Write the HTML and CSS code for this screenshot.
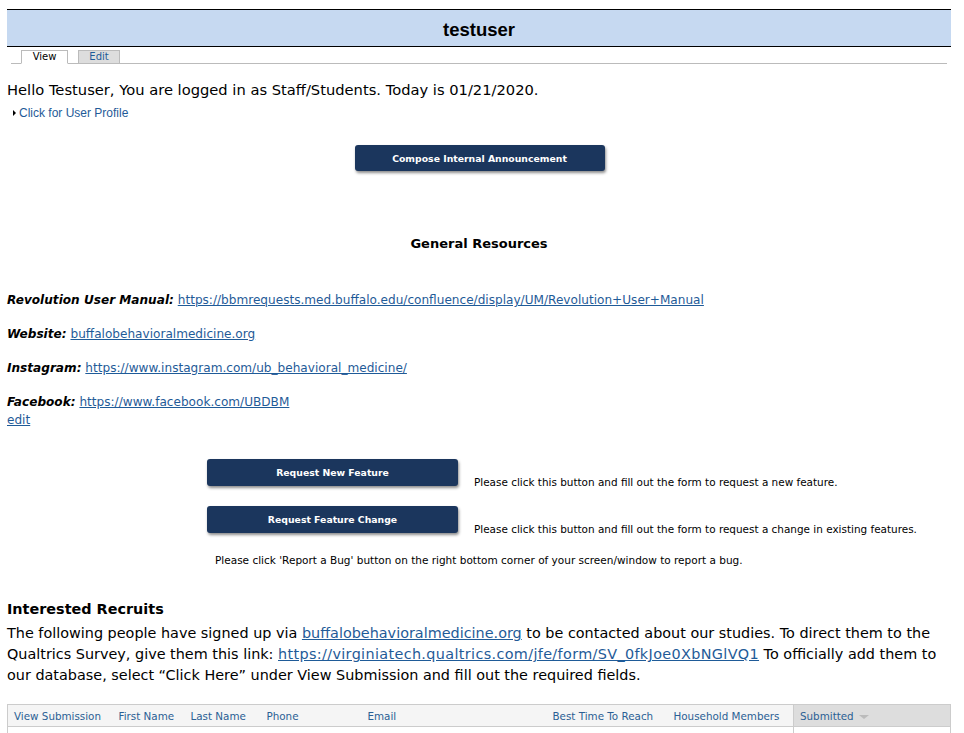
FILE: index.html
```html
<!DOCTYPE html>
<html>
<head>
<meta charset="utf-8">
<link rel="stylesheet" href="styles.css">
</head>
<body>
<div class="page">
  <div class="titlebar"><h1>testuser</h1></div>
  <div class="tabs">
    <span class="tab tab-active">View</span>
    <span class="tab tab-inactive">Edit</span>
  </div>
  <p class="hello">Hello Testuser, You are logged in as Staff/Students. Today is 01/21/2020.</p>
  <div class="profile"><span class="tri"></span><a href="#">Click for User Profile</a></div>
  <div class="center-row"><button class="btn btn-compose">Compose Internal Announcement</button></div>
  <h2 class="gr">General Resources</h2>
  <div class="resources">
    <p class="res"><b>Revolution User Manual:</b> <a href="#">https://bbmrequests.med.buffalo.edu/confluence/display/UM/Revolution+User+Manual</a></p>
    <p class="res"><b>Website:</b> <a href="#">buffalobehavioralmedicine.org</a></p>
    <p class="res"><b>Instagram:</b> <a href="#">https://www.instagram.com/ub_behavioral_medicine/</a></p>
    <p class="res res-last"><b>Facebook:</b> <a href="#">https://www.facebook.com/UBDBM</a></p>
    <a class="edit" href="#">edit</a>
  </div>
  <div class="requests">
    <div class="req-row">
      <button class="btn btn-req">Request New Feature</button>
      <span class="req-note">Please click this button and fill out the form to request a new feature.</span>
    </div>
    <div class="req-row">
      <button class="btn btn-req">Request Feature Change</button>
      <span class="req-note">Please click this button and fill out the form to request a change in existing features.</span>
    </div>
    <p class="bug">Please click 'Report a Bug' button on the right bottom corner of your screen/window to report a bug.</p>
  </div>
  <h3 class="ir">Interested Recruits</h3>
  <p class="intro">The following people have signed up via <a href="#">buffalobehavioralmedicine.org</a> to be contacted about our studies. To direct them to the Qualtrics Survey, give them this link: <a class="qlink" href="#">https://virginiatech.qualtrics.com/jfe/form/SV_0fkJoe0XbNGlVQ1</a> To officially add them to our database, select “Click Here” under View Submission and fill out the required fields.</p>
  <table class="grid">
    <thead>
      <tr>
        <th class="c1">View Submission</th>
        <th class="c2">First Name</th>
        <th class="c3">Last Name</th>
        <th class="c4">Phone</th>
        <th class="c5">Email</th>
        <th class="c6">Best Time To Reach</th>
        <th class="c7">Household Members</th>
        <th class="c8 sorted">Submitted <span class="sort"></span></th>
      </tr>
    </thead>
    <tbody>
      <tr><td></td><td></td><td></td><td></td><td></td><td></td><td></td><td class="sorted-cell"></td></tr>
    </tbody>
  </table>
</div>
</body>
</html>
```
FILE: styles.css
```css
* { box-sizing: border-box; }
html, body { margin: 0; padding: 0; background: #fff; }
body { font-family: "DejaVu Sans", Verdana, sans-serif; color: #000; }
.page { padding: 9px 13px 0 7px; }
a { color: #1f5b98; }

.titlebar {
  background: #c6d9f1;
  border-top: 1px solid #000;
  border-bottom: 1px solid #000;
  height: 38px;
  display: flex;
  align-items: center;
  justify-content: center;
}
.titlebar h1 {
  margin: 0;
  font-family: "Liberation Sans", Arial, sans-serif;
  font-size: 18.5px;
  font-weight: bold;
  padding-top: 4px;
}

.tabs {
  margin: 4px 4px 0 4px;
  border-bottom: 1px solid #bbb;
  height: 13px;
  display: flex;
  padding-left: 10px;
  gap: 10px;
  align-items: flex-end;
}
.tab {
  font-size: 10px;
  line-height: 11px;
  height: 14px;
  margin-bottom: -1px;
  border: 1px solid #bbb;
  text-align: center;
}
.tab-active { width: 47px; background: #fff; border-bottom-color: #fff; color: #000; }
.tab-inactive { width: 42px; background: #ddd; color: #1f5b98; }

.hello { margin: 17px 0 0 0; font-size: 14.7px; line-height: 17px; }
.profile {
  margin: 8px 0 0 6px;
  font-family: "Liberation Sans", Arial, sans-serif;
  font-size: 12px;
  line-height: 14px;
  display: flex;
  align-items: center;
  gap: 3px;
}
.profile a { text-decoration: none; }
.tri {
  width: 0; height: 0;
  border-left: 3px solid #000;
  border-top: 3px solid transparent;
  border-bottom: 3px solid transparent;
}

.center-row { display: flex; justify-content: center; margin-top: 25px; padding-left: 1px; }
.btn {
  background: #1b365d;
  color: #fff;
  border: none;
  border-radius: 3px;
  box-shadow: 1px 2px 3px rgba(0,0,0,0.45);
  font-family: "DejaVu Sans", Verdana, sans-serif;
  font-weight: bold;
  font-size: 9.3px;
  cursor: pointer;
}
.btn-compose { width: 250px; height: 26px; }

.gr { text-align: center; font-size: 13px; margin: 64px 0 0 0; line-height: 17px; }

.resources { margin-top: 40px; }
.res { margin: 0 0 17px 0; font-size: 12.1px; line-height: 17px; }
.res b { font-style: italic; }
.res-last { margin-bottom: 0; }
.edit { font-size: 12.1px; line-height: 14px; display: block; margin-top: 2px; }

.requests { margin-top: 32px; padding-left: 200px; }
.req-row { display: flex; align-items: flex-end; margin-bottom: 20px; }
.btn-req { width: 251px; height: 27px; flex: none; }
.req-note { font-size: 10.45px; margin-left: 16px; line-height: 12px; margin-bottom: -2px; }
.bug { font-size: 10.5px; margin: 0 0 0 8px; line-height: 12px; position: relative; top: 1px; }

.ir { font-size: 14.4px; margin: 35px 0 0 0; line-height: 18px; }
.intro { font-size: 14.4px; line-height: 21px; margin: 5px 0 0 0; }
.qlink { letter-spacing: 0.35px; }

.grid {
  margin-top: 18px;
  width: 944px;
  border-collapse: collapse;
  border: 1px solid #ccc;
  table-layout: fixed;
}
.grid th {
  background: #f5f5f5;
  font-weight: normal;
  font-size: 10.35px;
  color: #2b5f94;
  text-align: left;
  height: 22px;
  padding: 0 0 0 6px;
  border-bottom: 1px solid #ccc;
  white-space: nowrap;
}
.grid td { height: 10px; }
.c1 { width: 105px; }
.c2 { width: 72px; }
.c3 { width: 76px; }
.c4 { width: 101px; }
.c5 { width: 185px; }
.c6 { width: 121px; }
.c7 { width: 126px; }
.grid th.sorted { background: #ddd; border-left: 1px solid #ccc; }
.sorted-cell { border-left: 1px solid #ccc; }
.sort {
  display: inline-block;
  width: 0; height: 0;
  border-top: 4px solid #bbb;
  border-left: 5px solid transparent;
  border-right: 5px solid transparent;
  vertical-align: middle;
  margin-left: 2px;
}
```
